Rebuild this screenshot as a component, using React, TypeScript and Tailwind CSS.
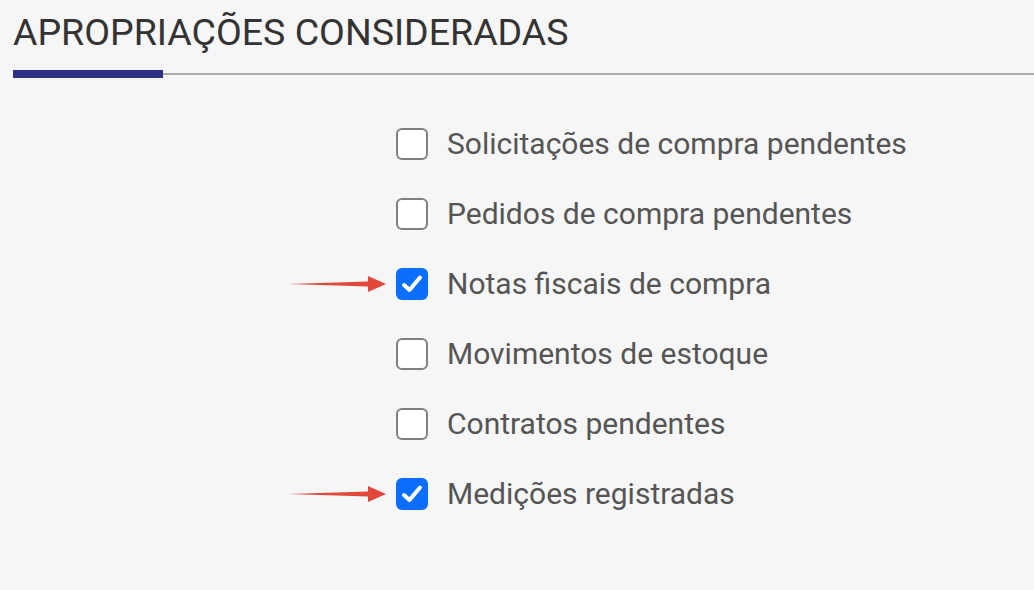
import React from 'react';

const items = [
  { label: 'Solicitações de compra pendentes', checked: false },
  { label: 'Pedidos de compra pendentes', checked: false },
  { label: 'Notas fiscais de compra', checked: true },
  { label: 'Movimentos de estoque', checked: false },
  { label: 'Contratos pendentes', checked: false },
  { label: 'Medições registradas', checked: true },
];

const Arrow = () => (
  <svg width="100" height="20" viewBox="0 0 100 20" className="absolute right-[100%] mr-[8px] top-1/2 -translate-y-1/2">
    <polygon points="0,10 80,7.5 80,2 98,10 80,18 80,12.5" fill="#e2483a" />
  </svg>
);

const CheckBox = ({ checked }: { checked: boolean }) =>
  checked ? (
    <div className="relative w-[32px] h-[32px] rounded-[6px] bg-[#0b6efd] flex items-center justify-center">
      <Arrow />
      <svg width="24" height="24" viewBox="0 0 24 24" fill="none" stroke="white" strokeWidth="4" strokeLinecap="round" strokeLinejoin="round">
        <polyline points="4,13 9.5,18 20,5.5" />
      </svg>
    </div>
  ) : (
    <div className="w-[32px] h-[32px] rounded-[6px] border-[2.5px] border-[#808080] bg-white" />
  );

export default function App() {
  return (
    <div className="w-[1034px] h-[590px] bg-[#f6f6f6] font-['Roboto',sans-serif] overflow-hidden">
      <div className="pl-[13px] pt-[12px]">
        <h1 className="text-[37.5px] leading-[40px] text-[#333] font-normal">APROPRIAÇÕES CONSIDERADAS</h1>
      </div>
      <div className="flex items-center mt-[18px] pl-[13px]">
        <div className="w-[150px] h-[8px] bg-[#2b3284]" />
        <div className="flex-1 h-[2px] bg-[#ababab]" />
      </div>
      <div className="flex flex-col pl-[396px] pt-[50px] gap-[38px]">
        {items.map((it) => (
          <div key={it.label} className="flex items-center gap-[19px] h-[32px]">
            <CheckBox checked={it.checked} />
            <span className="text-[30px] text-[#555] leading-[32px]">{it.label}</span>
          </div>
        ))}
      </div>
    </div>
  );
}
